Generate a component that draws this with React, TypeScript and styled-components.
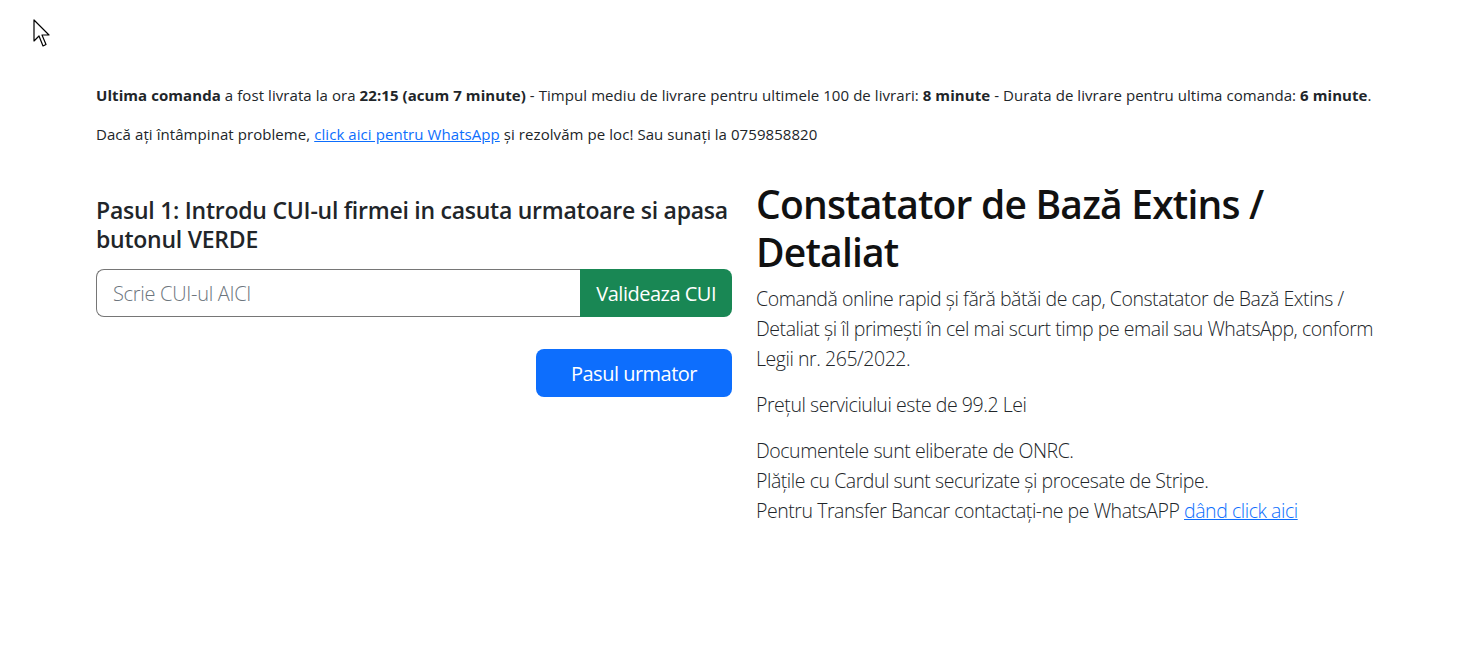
import React from 'react';
import styled, { createGlobalStyle } from 'styled-components';

const GlobalStyle = createGlobalStyle`
  * { box-sizing: border-box; }
  body {
    margin: 0;
    background: #fff;
    color: #212529;
    font-family: "Open Sans", "Noto Sans", sans-serif;
  }
`;

const Page = styled.div`
  position: relative;
  min-height: 667px;
  padding: 83px 72px 0 84px;
`;

const Cursor = styled.svg`
  position: absolute;
  left: 33px;
  top: 19px;
`;

const Info = styled.p`
  margin: 0 12px 15px;
  font-size: 15px;
  line-height: 24px;
  letter-spacing: 0.07px;
`;

const Link = styled.a`
  color: #0d6efd;
  text-decoration: underline;
`;

const Row = styled.div`
  display: grid;
  grid-template-columns: 1fr 1fr;
  margin-top: 34px;
`;

const Col = styled.div<{ $offset?: number }>`
  padding: ${(p) => p.$offset ?? 0}px 12px 0;
  display: flex;
  flex-direction: column;
`;

const StepTitle = styled.h4`
  margin: 0 0 15px;
  font-size: 23px;
  line-height: 29px;
  font-weight: 600;
  letter-spacing: -0.25px;
`;

const InputGroup = styled.div`
  display: flex;
  height: 48px;
`;

const Input = styled.input`
  flex: 1;
  min-width: 0;
  border: 1px solid #767676;
  border-right: none;
  border-radius: 8px 0 0 8px;
  padding: 0 16px;
  font: 300 20px "Open Sans", "Noto Sans", sans-serif;
  letter-spacing: -0.3px;
  color: #212529;
  &::placeholder { color: #6c757d; }
`;

const Button = styled.button<{ $tone: 'green' | 'blue'; $joined?: boolean }>`
  border: none;
  height: 48px;
  padding: 0 16px;
  font: 400 20px "Open Sans", "Noto Sans", sans-serif;
  letter-spacing: -0.5px;
  color: #fff;
  background: ${(p) => (p.$tone === 'green' ? '#198754' : '#0d6efd')};
  border-radius: ${(p) => (p.$joined ? '0 8px 8px 0' : '8px')};
  cursor: pointer;
`;

const NextWrap = styled.div`
  display: flex;
  justify-content: flex-end;
  margin-top: 32px;
`;

const NextButton = styled(Button)`
  width: 196px;
`;

const Title = styled.h1`
  margin: 0 0 8px;
  font-size: 39px;
  line-height: 48px;
  font-weight: 600;
  letter-spacing: -0.8px;
  color: #111;
`;

const Lead = styled.p`
  margin: 0 0 16px;
  font-size: 19.5px;
  line-height: 30px;
  font-weight: 300;
  letter-spacing: -0.45px;
`;

export default function App() {
  return (
    <>
      <GlobalStyle />
      <Page>
        <Cursor width="20" height="29" viewBox="0 0 20 29">
          <path d="M1 1 L1 22 L6 17 L10 27 L13 25.5 L9 16 L16 16 Z" fill="#fff" stroke="#000" strokeWidth="1.2" strokeLinejoin="round" />
        </Cursor>
        <Info>
          <b>Ultima comanda</b> a fost livrata la ora <b>22:15 (acum 7 minute)</b> - Timpul mediu de livrare pentru
          ultimele 100 de livrari: <b>8 minute</b> - Durata de livrare pentru ultima comanda: <b>6 minute</b>.
        </Info>
        <Info>
          Dacă ați întâmpinat probleme, <Link href="#">click aici pentru WhatsApp</Link> și rezolvăm pe loc! Sau sunați
          la 0759858820
        </Info>
        <Row>
          <Col $offset={16}>
            <StepTitle>Pasul 1: Introdu CUI-ul firmei in casuta urmatoare si apasa butonul VERDE</StepTitle>
            <InputGroup>
              <Input placeholder="Scrie CUI-ul AICI" />
              <Button $tone="green" $joined>Valideaza CUI</Button>
            </InputGroup>
            <NextWrap>
              <NextButton $tone="blue">Pasul urmator</NextButton>
            </NextWrap>
          </Col>
          <Col>
            <Title>Constatator de Bază Extins / Detaliat</Title>
            <Lead>
              Comandă online rapid și fără bătăi de cap, Constatator de Bază Extins / Detaliat și îl primești în cel mai
              scurt timp pe email sau WhatsApp, conform Legii nr. 265/2022.
            </Lead>
            <Lead>Prețul serviciului este de 99.2 Lei</Lead>
            <Lead>
              Documentele sunt eliberate de ONRC.
              <br />
              Plățile cu Cardul sunt securizate și procesate de Stripe.
              <br />
              Pentru Transfer Bancar contactați-ne pe WhatsAPP <Link href="#">dând click aici</Link>
            </Lead>
          </Col>
        </Row>
      </Page>
    </>
  );
}
